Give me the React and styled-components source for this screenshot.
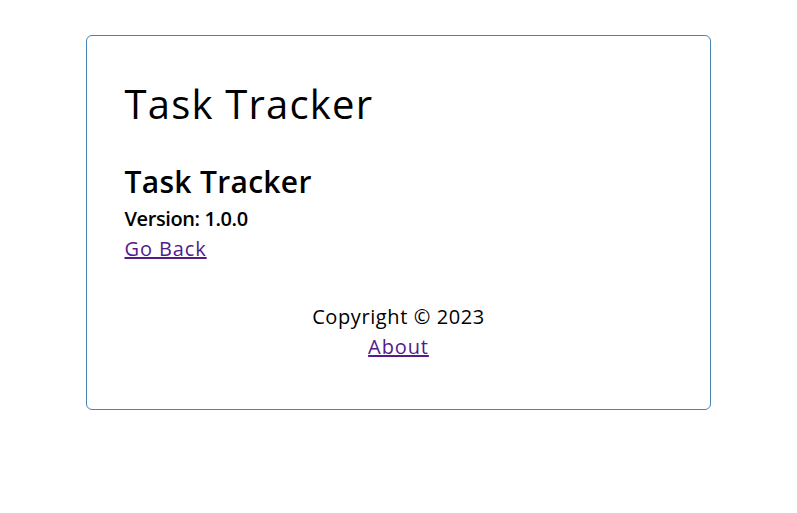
import React from 'react'
import styled, {createGlobalStyle} from 'styled-components'

const GlobalStyle = createGlobalStyle`
  * {
    box-sizing: border-box;
  }
  body {
    margin: 0;
    font-family: 'Open Sans', 'DejaVu Sans', sans-serif;
    background: #fff;
    color: #000;
  }
`

const Container = styled.div`
  width: 625px;
  margin: 35px auto 0;
  min-height: 375px;
  border: 1px solid steelblue;
  border-radius: 6px;
  padding: 37.5px;
`

const Header = styled.header`
  display: flex;
  justify-content: space-between;
  align-items: center;
  margin-bottom: 25px;
`

const Title = styled.h1`
  margin: 0;
  font-size: 40px;
  font-weight: 500;
  line-height: 60px;
  letter-spacing: 1.2px;
`

const SubTitle = styled.h2`
  margin: 0;
  font-size: 30px;
  font-weight: 600;
  line-height: 45px;
  letter-spacing: 0.3px;
`

const Version = styled.h4`
  margin: 0;
  font-size: 20px;
  font-weight: 600;
  line-height: 30px;
  letter-spacing: -0.4px;
`

const TextLink = styled.a`
  display: ${({block}) => (block ? 'block' : 'inline')};
  font-size: 20px;
  line-height: 30px;
  letter-spacing: 0.9px;
  color: #551a8b;
  text-decoration: underline;
`

const Footer = styled.footer`
  margin-top: 38px;
  text-align: center;
  font-size: 20px;
  line-height: 30px;
`

const Copyright = styled.p`
  margin: 0;
  letter-spacing: 0.6px;
`

const App = () => {
  return (
    <>
      <GlobalStyle />
      <Container>
        <Header>
          <Title>Task Tracker</Title>
        </Header>
        <div>
          <SubTitle>Task Tracker</SubTitle>
          <Version>Version: 1.0.0</Version>
          <TextLink href="#" block>Go Back</TextLink>
        </div>
        <Footer>
          <Copyright>Copyright &copy; 2023</Copyright>
          <TextLink href="#">About</TextLink>
        </Footer>
      </Container>
    </>
  )
}

export default App
